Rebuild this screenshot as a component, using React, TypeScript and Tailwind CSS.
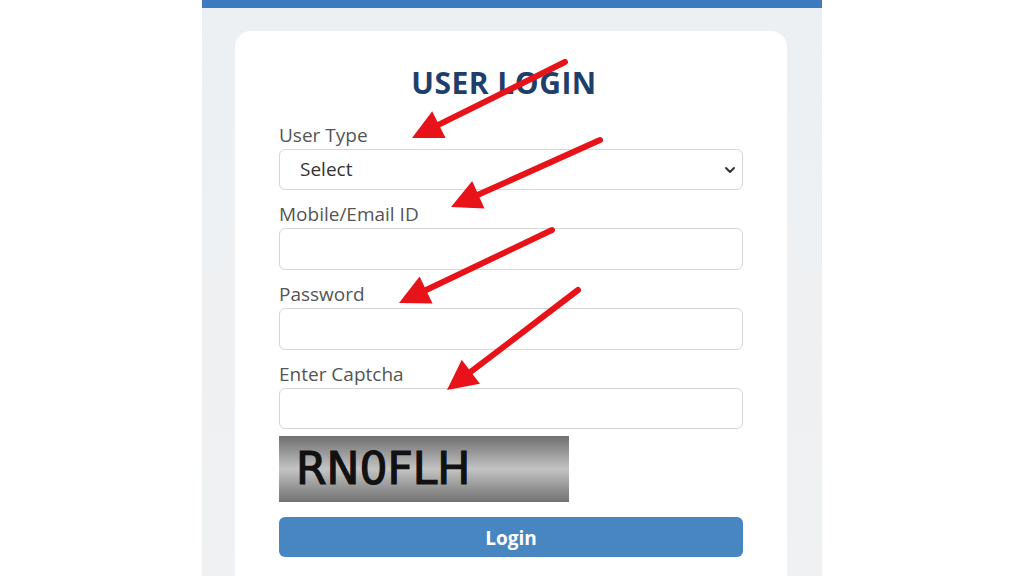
import { ChevronDown } from "lucide-react"

type Arrow = { x1: number; y1: number; x2: number; y2: number }

// red annotation arrows drawn on top of the form
const arrows: Arrow[] = [
  { x1: 565, y1: 62, x2: 412, y2: 138 },
  { x1: 600, y1: 140, x2: 451, y2: 207 },
  { x1: 552, y1: 230, x2: 399, y2: 303 },
  { x1: 578, y1: 290, x2: 447, y2: 390 },
]

function ArrowShape({ a }: { a: Arrow }) {
  const dx = a.x2 - a.x1
  const dy = a.y2 - a.y1
  const len = Math.hypot(dx, dy)
  const ux = dx / len
  const uy = dy / len
  const head = 30
  const half = 15
  const bx = a.x2 - ux * head
  const by = a.y2 - uy * head
  const p1 = `${bx - uy * half},${by + ux * half}`
  const p2 = `${bx + uy * half},${by - ux * half}`
  return (
    <g>
      <line x1={a.x1} y1={a.y1} x2={bx + ux * 4} y2={by + uy * 4} stroke="#e81219" strokeWidth={6} strokeLinecap="round" />
      <polygon points={`${a.x2},${a.y2} ${p1} ${p2}`} fill="#e81219" />
    </g>
  )
}

function Field({ label, children }: { label: string; children: React.ReactNode }) {
  return (
    <div className="flex flex-col">
      <div className="h-6 leading-6 text-[19px] text-[#555]">{label}</div>
      <div className="mt-[2px]">{children}</div>
    </div>
  )
}

export default function App() {
  return (
    <div className="relative w-full h-[576px] bg-white overflow-hidden font-['Open_Sans',sans-serif]">
      <div className="flex justify-center">
        <div className="w-[620px] h-[576px] border-t-[8px] border-[#3d7bbf] bg-gradient-to-b from-[#edf0f3] to-[#eff1f2] pt-[23px] pl-[33px] pr-[35px]">
          <div className="bg-white rounded-2xl h-[600px] pt-[34px] px-[44px]">
            <h1 className="text-center pr-[14px] text-[30px] leading-9 font-bold text-[#1f3f6a] tracking-[0.5px]">USER LOGIN</h1>

            <div className="mt-[22px] flex flex-col gap-[12px]">
              <Field label="User Type">
                <div className="h-[41px] rounded-md border border-[#d6d6d6] flex items-center justify-between pl-[20px] pr-[4px] text-[19px] text-[#333]">
                  <span>Select</span>
                  <ChevronDown className="w-4 h-4 text-[#333]" strokeWidth={3} />
                </div>
              </Field>
              <Field label="Mobile/Email ID">
                <div className="h-[42px] rounded-md border border-[#d6d6d6]" />
              </Field>
              <Field label="Password">
                <div className="h-[42px] rounded-md border border-[#d6d6d6]" />
              </Field>
              <Field label="Enter Captcha">
                <div className="h-[41px] rounded-md border border-[#d6d6d6]" />
              </Field>
            </div>

            <div className="mt-[7px] w-[290px] h-[66px] bg-gradient-to-b from-[#6f6f6f] via-[#c4c4c4] to-[#727272] flex items-center pl-[17px]">
              <span className="font-['DejaVu_Sans',sans-serif] text-[44px] leading-none text-[#111] [-webkit-text-stroke:1.2px_#111]">RN0FLH</span>
            </div>

            <button className="mt-[15px] w-full h-[40px] rounded-md bg-[#4886c2] text-white text-[19px] font-bold pt-[3px]">
              Login
            </button>
          </div>
        </div>
      </div>

      <svg className="absolute inset-0 pointer-events-none" width={1024} height={576}>
        {arrows.map((a, i) => (
          <ArrowShape key={i} a={a} />
        ))}
      </svg>
    </div>
  )
}
